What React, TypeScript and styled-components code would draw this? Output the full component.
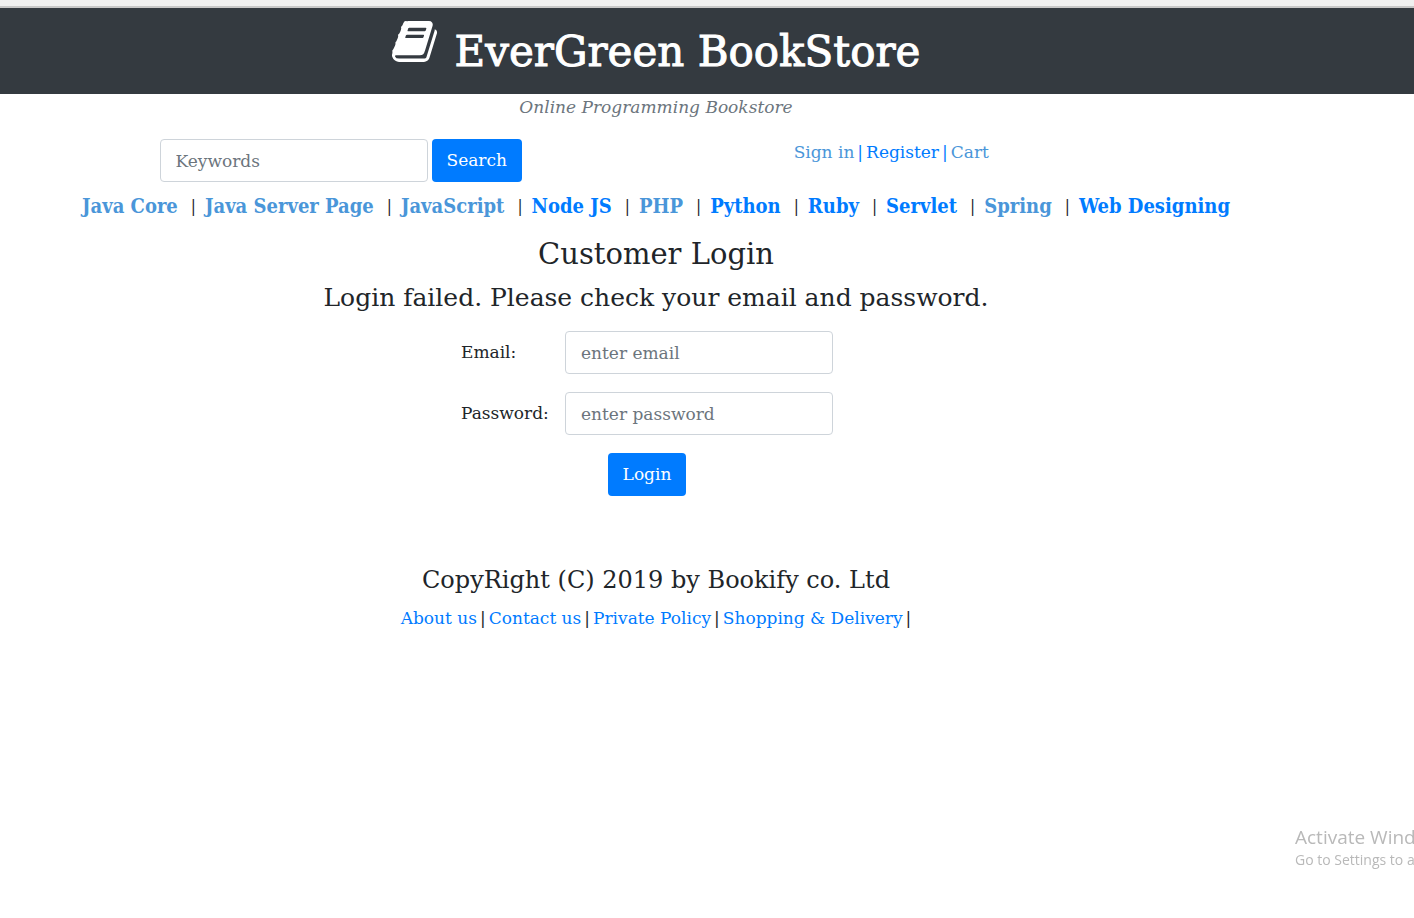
import React from "react";
import styled, { createGlobalStyle } from "styled-components";

const slab = `"Roboto Slab", "DejaVu Serif", serif`;
const slabCondensed = `"Roboto Slab", "DejaVu Serif Condensed", "DejaVu Serif", serif`;

const GlobalStyle = createGlobalStyle`
  * { box-sizing: border-box; }
  body {
    margin: 0;
    background: #fff;
    color: #212529;
    font-family: ${slab};
    font-size: 17px;
    line-height: 27px;
    overflow-x: hidden;
  }
`;

const TopEdge = styled.div`
  height: 8px;
  background: #f0f0f0;
  border-bottom: 2px solid #c8c8c8;
`;

const Header = styled.header`
  display: flex;
  justify-content: center;
  gap: 18px;
  height: 86px;
  padding: 13px 102px 0 0;
  background: #343a40;
  color: #fff;
`;

const BookIcon = styled.svg`
  width: 45px;
  height: 41px;
  fill: currentColor;
`;

const Brand = styled.h1`
  margin: 4px 0 0;
  font-size: 42px;
  font-weight: 500;
  line-height: 54px;
  white-space: nowrap;
  -webkit-text-stroke: 1px currentColor;
`;

const Page = styled.div`
  display: flex;
  flex-direction: column;
  align-items: center;
  padding-right: 102px;
  white-space: nowrap;
`;

const Tagline = styled.em`
  color: #6c757d;
`;

const Tools = styled.div`
  display: grid;
  grid-template-columns: 1fr 1fr;
  width: 100%;
  max-width: 1312px;
  margin-top: 18px;
  padding: 0 186px 0 25px;
`;

const SearchForm = styled.form`
  display: flex;
  justify-content: center;
  gap: 4px;
  padding-left: 81px;
`;

const Field = styled.input`
  width: 268px;
  height: 43px;
  padding: 6px 15px;
  border: 1px solid #ced4da;
  border-radius: 4px;
  background: #fff;
  color: #495057;
  font: inherit;
  &::placeholder { color: #6c757d; opacity: 1; }
`;

const Button = styled.button`
  height: 43px;
  padding: 6px 15px;
  border: 0;
  border-radius: 4px;
  background: #007bff;
  color: #fff;
  font: inherit;
`;

const Account = styled.div`
  display: flex;
  justify-content: center;
  gap: 3px;
  padding-left: 81px;
  color: #007bff;
`;

const Link = styled.a<{ $visited?: boolean }>`
  color: ${(p) => (p.$visited ? "#4a96d9" : "#007bff")};
  text-decoration: none;
`;

const Categories = styled.nav`
  display: flex;
  gap: 9px;
  margin-top: 11px;
  font-family: ${slabCondensed};
`;

const Category = styled(Link)`
  margin-right: 4px;
  font-size: 20px;
  font-weight: 700;
  &:last-child { margin-right: 0; }
`;

const Title = styled.h2`
  margin: 15px 0 9px;
  font-size: 29px;
  font-weight: 400;
  line-height: 38px;
`;

const Message = styled.p`
  margin: 0;
  font-size: 25px;
  line-height: 32px;
`;

const Copyright = styled(Message)`
  font-size: 24px;
`;

const LoginForm = styled.form`
  display: grid;
  grid-template-columns: 86px 268px;
  gap: 18px;
  align-items: center;
  margin: 17px 18px 0 0;
  ${Button} {
    grid-column: 1 / -1;
    justify-self: center;
  }
`;

const Footer = styled.footer`
  margin-top: 68px;
  text-align: center;
`;

const FooterLinks = styled.div`
  display: flex;
  justify-content: center;
  gap: 3px;
  margin-top: 9px;
`;

const Watermark = styled.aside`
  position: fixed;
  right: 0;
  bottom: 48px;
  width: 119px;
  overflow: hidden;
  color: #b9b9b9;
  font-family: "Open Sans", sans-serif;
  font-size: 14px;
  line-height: 20px;
  white-space: nowrap;
`;

const WatermarkTitle = styled.div`
  font-size: 19px;
  line-height: 25px;
`;

const categories = [
  { name: "Java Core", visited: true },
  { name: "Java Server Page", visited: true },
  { name: "JavaScript", visited: true },
  { name: "Node JS" },
  { name: "PHP", visited: true },
  { name: "Python" },
  { name: "Ruby" },
  { name: "Servlet" },
  { name: "Spring", visited: true },
  { name: "Web Designing" },
];

const footerLinks = ["About us", "Contact us", "Private Policy", "Shopping & Delivery"];

export default function App() {
  return (
    <>
      <GlobalStyle />
      <TopEdge />
      <Header>
        <BookIcon viewBox="0 0 1664 1536" preserveAspectRatio="none" aria-hidden="true">
          <g transform="translate(0 1408) scale(1 -1)">
            <path d="M1639 1058q40 -57 18 -129l-275 -906q-19 -64 -76.5 -107.5t-122.5 -43.5h-923q-77 0 -148.5 53.5t-99.5 131.5q-24 67 -2 127q0 4 3 27t4 37q1 8 -3 21.5t-3 19.5q2 11 8 21t16.5 23.5t16.5 23.5q23 38 45 91.5t30 91.5q3 10 0.5 30t-0.5 28q3 11 17 28t17 23q21 36 42 92t25 90q1 9 -2.5 32t0.5 28q4 13 22 30.5t22 22.5q19 26 42.5 84.5t27.5 96.5q1 8 -3 25.5t-2 26.5q2 8 9 18t18 23t17 21q8 12 16.5 30.5t15 35t16 36t19.5 32t26.5 23.5t36 11.5t47.5 -5.5l-1 -3q38 9 51 9h761q74 0 114 -56t18 -130l-274 -906q-36 -119 -71.5 -153.5t-128.5 -34.5h-869q-27 0 -38 -15q-11 -16 -1 -43q24 -70 144 -70h923q29 0 56 15.5t35 41.5l300 987q7 22 5 57q38 -15 59 -43zM575 1056q-4 -13 2 -22.5t20 -9.5h608q13 0 25.5 9.5t16.5 22.5l21 64q4 13 -2 22.5t-20 9.5h-608q-13 0 -25.5 -9.5t-16.5 -22.5zM492 800q-4 -13 2 -22.5t20 -9.5h608q13 0 25.5 9.5t16.5 22.5l21 64q4 13 -2 22.5t-20 9.5h-608q-13 0 -25.5 -9.5t-16.5 -22.5z" />
          </g>
        </BookIcon>
        <Brand>EverGreen BookStore</Brand>
      </Header>
      <Page>
        <Tagline>Online Programming Bookstore</Tagline>
        <Tools>
          <SearchForm onSubmit={(e) => e.preventDefault()}>
            <Field type="search" aria-label="Keywords" placeholder="Keywords" />
            <Button type="submit">Search</Button>
          </SearchForm>
          <Account>
            <Link href="#signin" $visited>Sign in</Link>|
            <Link href="#register">Register</Link>|
            <Link href="#cart" $visited>Cart</Link>
          </Account>
        </Tools>
        <Categories>
          {categories.map((c, i) => (
            <React.Fragment key={c.name}>
              {i > 0 && <span>|</span>}
              <Category href="#category" $visited={c.visited}>{c.name}</Category>
            </React.Fragment>
          ))}
        </Categories>
        <Title>Customer Login</Title>
        <Message>Login failed. Please check your email and password.</Message>
        <LoginForm onSubmit={(e) => e.preventDefault()}>
          <label htmlFor="email">Email:</label>
          <Field id="email" type="text" placeholder="enter email" />
          <label htmlFor="password">Password:</label>
          <Field id="password" type="password" placeholder="enter password" />
          <Button type="submit">Login</Button>
        </LoginForm>
        <Footer>
          <Copyright>CopyRight (C) 2019 by Bookify co. Ltd</Copyright>
          <FooterLinks>
            {footerLinks.map((name) => (
              <React.Fragment key={name}>
                <Link href="#info">{name}</Link>
                <span>|</span>
              </React.Fragment>
            ))}
          </FooterLinks>
        </Footer>
      </Page>
      <Watermark>
        <WatermarkTitle>Activate Windows</WatermarkTitle>
        Go to Settings to activate Windows.
      </Watermark>
    </>
  );
}
